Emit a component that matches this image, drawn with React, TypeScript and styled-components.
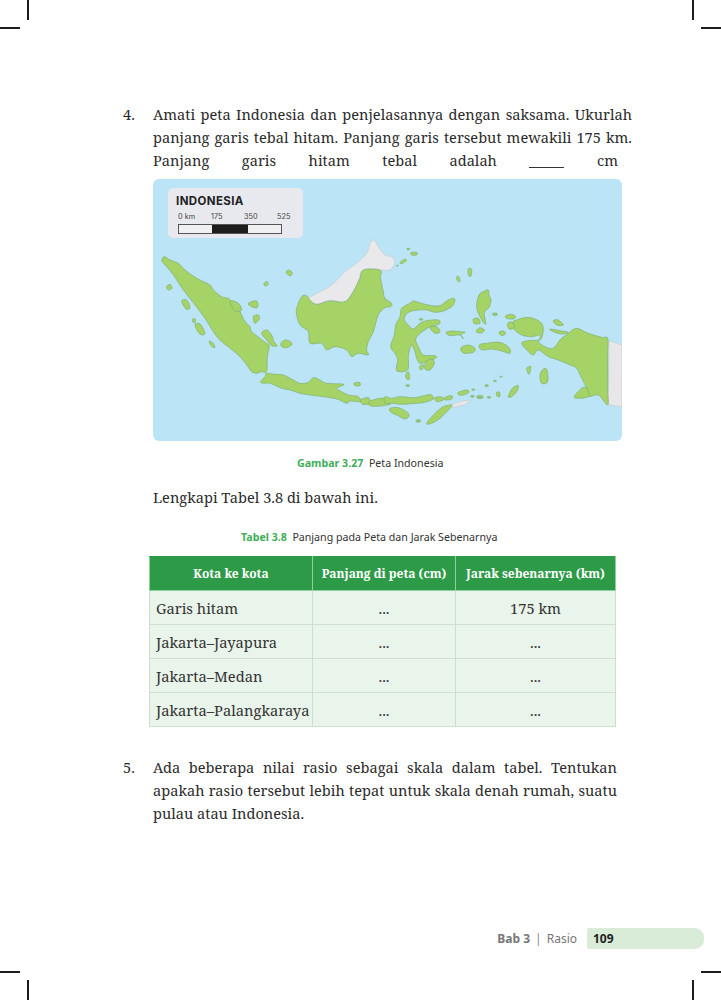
import React from "react";
import styled, { createGlobalStyle } from "styled-components";

const GlobalStyle = createGlobalStyle`
  html, body { margin: 0; padding: 0; background: #fff; }
`;

const SERIF = `"Noto Serif", "DejaVu Serif", serif`;

/* Map shapes, in 3x coordinates of each half of the map */
const WEST_LAND = [
  "37,250 45,245 60,255 85,265 105,285 125,300 150,315 180,330 190,345 215,365 235,370 250,385 265,400 275,420 285,440 300,455 305,470 330,490 350,505 358,515 352,545 350,590 335,590 320,595 305,590 290,570 270,545 240,520 210,495 190,470 165,430 135,390 100,345 70,300 50,275 37,260",
  "332,620 345,605 350,595 375,598 400,600 425,612 450,625 475,622 490,608 510,615 530,625 582,628 560,640 575,650 595,660 625,665 630,680 600,678 590,685 560,672 520,665 480,660 450,655 420,645 395,640 360,625 340,625",
  "440,400 455,365 470,362 480,375 500,388 540,378 585,380 610,350 630,310 640,285 690,285 692,310 700,350 705,370 725,385 722,395 705,398 685,420 670,470 655,500 650,525 655,540 625,535 605,545 590,525 555,515 530,525 515,505 480,505 475,470 450,450 440,420",
  "335,475 350,465 365,480 372,500 382,512 365,512 350,495",
  "393,505 405,495 422,500 425,510 410,518 395,515",
  "408,292 418,285 427,295 420,303",
  "295,385 320,378 322,398 305,395",
  "310,425 325,420 328,432 315,445",
  "240,378 265,385 275,405 255,408",
  "50,335 60,328 66,340 55,345",
  "95,378 110,375 120,398 108,402",
  "135,450 150,447 165,475 150,478",
  "178,498 190,505 195,518 183,512",
  "128,432 136,432 136,442 129,442",
  "342,325 352,320 354,330 344,332",
  "632,675 655,668 660,685 638,688",
  "658,680 690,670 720,672 720,688 680,694 660,692",
  "612,625 628,622 630,632 615,632",
];

const EAST_LAND = [
  "205,370 210,378 200,395 175,408 150,412 125,405 100,405 75,410 62,420 58,435 70,450 85,462 105,445 125,437 160,435 163,447 135,455 115,468 100,480 92,495 100,515 115,540 150,542 152,550 125,560 105,565 95,550 90,530 80,510 75,520 70,545 68,585 35,587 38,555 30,535 17,515 28,480 32,450 45,425 50,400 75,385 85,378 110,385 140,392 165,392 185,378",
  "385,440 395,435 430,427 465,440 475,460 470,490 460,500 480,515 505,520 525,495 550,475 575,460 610,475 650,487 668,490 668,540 668,600 668,650 668,690 640,660 610,665 605,640 590,610 575,580 555,570 520,555 490,545 460,525 445,540 430,530 410,505 430,497 460,495 465,480 440,485 410,480 385,460",
  "568,668 590,640 605,640 610,665",
  "125,745 150,715 175,695 200,690 195,700 165,730 140,745",
  "0,665 20,670 45,665 90,668 125,660 140,660 145,672 120,682 85,686 45,688 25,685 0,685",
  "150,668 170,666 175,675 155,680",
  "178,668 200,662 200,672 182,675",
  "15,700 40,698 65,710 72,722 60,732 35,720 18,712",
  "220,652 245,645 252,652 235,660 222,660",
  "228,518 250,510 270,520 265,532 240,535 230,530",
  "283,510 305,505 345,502 372,518 375,535 350,528 320,522 290,525",
  "183,472 205,468 240,472 228,478 235,492 225,480 195,482",
  "275,465 285,458 298,465 290,474 276,472",
  "342,472 355,468 362,476 350,482",
  "282,360 295,350 310,345 312,360 318,375 312,398 298,412 302,448 285,425 275,395",
  "265,432 280,430 285,445 268,446",
  "362,422 380,418 392,425 385,432 365,430",
  "368,445 382,442 388,458 372,462",
  "505,437 520,435 535,450 515,450",
  "495,462 530,468 550,472 530,477 505,470",
  "465,600 475,582 486,585 488,620 470,625",
  "370,665 382,640 400,632 395,650 380,665",
  "425,580 438,575 432,598",
  "135,458 155,455 165,470 150,475",
  "122,562 140,552 148,565 135,585 120,582",
  "105,572 115,570 112,584 104,582",
  "62,600 70,590 74,612 65,612",
  "250,282 260,282 258,303 250,300",
  "215,305 222,305 225,320 216,316",
  "45,262 60,252 64,258 50,266",
  "78,233 95,232 95,240 80,240",
  "335,652 344,652 344,665 335,662",
];

const TINY_ISLANDS = [
  [70, 222, 5], [68, 632, 6], [100, 738, 8], [265, 644, 5], [305, 632, 6], [330, 618, 5], [348, 605, 4],
  [262, 664, 6], [285, 666, 10], [312, 667, 6], [108, 433, 6], [37, 272, 3], [330, 418, 8],
];

const WEST_GREY = ["475,372 510,350 545,330 585,290 620,265 650,235 660,205 672,195 685,215 705,240 725,245 735,262 720,285 690,285 640,285 620,330 585,380 540,375 500,388"];
const EAST_GREY = [
  "672,497 711,510 711,695 670,690",
  "195,690 230,678 258,675 240,690 200,698",
];

/* closed catmull-rom through the points, so coasts are not straight segments */
const smooth = (points: string) => {
  const pts = points.split(" ").map((p) => p.split(",").map(Number));
  const n = pts.length;
  let d = `M${pts[0][0]},${pts[0][1]}`;
  for (let i = 0; i < n; i++) {
    const [p0, p1, p2, p3] = [pts[(i - 1 + n) % n], pts[i], pts[(i + 1) % n], pts[(i + 2) % n]];
    const c1 = [p1[0] + (p2[0] - p0[0]) / 6, p1[1] + (p2[1] - p0[1]) / 6];
    const c2 = [p2[0] - (p3[0] - p1[0]) / 6, p2[1] - (p3[1] - p1[1]) / 6];
    d += `C${c1[0]},${c1[1]} ${c2[0]},${c2[1]} ${p2[0]},${p2[1]}`;
  }
  return d + "Z";
};

const Page = styled.div`
  position: relative;
  width: 721px;
  height: 1000px;
  overflow: hidden;
  display: flex;
  flex-direction: column;
  padding-top: 103px;
  box-sizing: border-box;
  font-family: ${SERIF};
  color: #2b2b2b;
`;

const Crop = styled.span<{ $x: "left" | "right"; $y: "top" | "bottom"; $dir: "h" | "v" }>`
  position: absolute;
  background: #1c1c1c;
  ${({ $dir, $x }) =>
    $dir === "h"
      ? `width: 20px; height: 2px; ${$x}: 0;`
      : `width: 2px; height: 20px; ${$x}: 27px;`}
  ${({ $dir, $y }) => ($dir === "h" ? `${$y}: 27px;` : `${$y}: 0;`)}
`;

const Item = styled.div`
  display: flex;
  padding-left: 123px;
`;

const Marker = styled.div`
  width: 30px;
  font-size: 14.6px;
  line-height: 23px;
`;

const Body = styled.div<{ $width: number }>`
  width: ${({ $width }) => $width}px;
`;

const Line = styled.div<{ $justify?: boolean; $width?: number }>`
  font-size: 14.6px;
  line-height: 23px;
  white-space: nowrap;
  ${({ $width }) => $width && `width: ${$width}px;`}
  ${({ $justify }) => $justify && "text-align: justify; text-align-last: justify; white-space: normal;"}
`;

const Blank = styled.span`
  display: inline-block;
  width: 35px;
  height: 13px;
  border-bottom: 1px solid #333;
  vertical-align: -2px;
`;

const MapCard = styled.div`
  position: relative;
  width: 469px;
  height: 262px;
  margin-top: 7px;
  background: #bbe5f6;
  border-radius: 6px;
  overflow: hidden;
`;

const MapSvg = styled.svg`
  display: block;
  width: 100%;
  height: 100%;
`;

const Legend = styled.div`
  position: absolute;
  left: 15px;
  top: 9px;
  width: 135px;
  height: 50px;
  padding: 7px 0 0 8px;
  box-sizing: border-box;
  background: #e8e8ef;
  border-radius: 5px;
  font-family: Inter, "Liberation Sans", sans-serif;
  color: #222;
`;

const LegendTitle = styled.div`
  font-size: 11.5px;
  font-weight: 700;
  line-height: 12px;
  letter-spacing: 0.4px;
`;

const ScaleLabels = styled.div`
  display: flex;
  margin-top: 5px;
  font-size: 7.3px;
  line-height: 9px;
  color: #444;
`;

const ScaleLabel = styled.span`
  flex: none;
  width: 33px;
  padding-left: 2px;
  box-sizing: border-box;
`;

const ScaleBar = styled.div`
  display: flex;
  width: 104px;
  height: 10px;
  margin: 3px 0 0 2px;
  box-sizing: border-box;
  border: 1px solid #555;
  background: #f0f0f2;
`;

const ScaleSegment = styled.div<{ $dark?: boolean; $width: number }>`
  width: ${({ $width }) => $width}px;
  background: ${({ $dark }) => ($dark ? "#1d1d1d" : "transparent")};
`;

const Caption = styled.div<{ $left: number; $top: number }>`
  margin: ${({ $top }) => $top}px 0 0 ${({ $left }) => $left}px;
  font-family: "Noto Sans", sans-serif;
  font-size: 10.65px;
  line-height: 14px;
  color: #333;
  white-space: pre;
`;

const CaptionLabel = styled.span`
  color: #3fae5a;
  font-weight: 700;
`;

const Lead = styled.div`
  margin: 16px 0 0 153px;
  font-size: 14.6px;
  line-height: 23px;
`;

const Table = styled.table`
  width: 466px;
  margin: 12px 0 0 149px;
  border-collapse: collapse;
  table-layout: fixed;
`;

const HeadCell = styled.th<{ $width: number }>`
  width: ${({ $width }) => $width}px;
  height: 34px;
  padding: 0;
  box-sizing: border-box;
  background: #2d9a47;
  border: 1px solid #8fd09c;
  border-top-color: #2d9a47;
  color: #fff;
  font-size: 12px;
  font-weight: 700;
  text-align: center;
`;

const Cell = styled.td<{ $first?: boolean }>`
  height: 34px;
  padding: ${({ $first }) => ($first ? "0 0 0 6px" : "0")};
  box-sizing: border-box;
  background: #e9f4ea;
  border: 1px solid #cfdfcd;
  font-size: 14.7px;
  text-align: ${({ $first }) => ($first ? "left" : "center")};
  color: #333;
  white-space: nowrap;
`;

const ClosingItem = styled(Item)`
  margin-top: 29px;
`;

const Footer = styled.div`
  display: flex;
  align-items: center;
  align-self: flex-end;
  margin-top: auto;
  margin-bottom: 51px;
  margin-right: 17px;
  font-family: "Noto Sans", sans-serif;
  font-size: 12px;
  color: #777;
`;

const Chapter = styled.b`
  font-weight: 700;
`;

const Divider = styled.span`
  margin: 0 5px;
  color: #888;
  font-weight: 400;
`;

const PageNumber = styled.div`
  width: 117px;
  height: 21px;
  margin-left: 10px;
  padding-left: 6px;
  box-sizing: border-box;
  background: #d9ecd8;
  border-radius: 2px 9px 9px 2px;
  color: #222;
  font-weight: 700;
  line-height: 22px;
`;

const LAND_STYLE = { fill: "#a6d365", stroke: "#7dae72", strokeWidth: 2 };

const IndonesiaMap = () => (
  <MapSvg viewBox="0 0 469 262">
    <g transform="translate(-3,-4) scale(0.3333)">
      {WEST_GREY.map((points) => (
        <path key={points} d={smooth(points)} fill="#e9e9ec" stroke="#c4ccd2" strokeWidth={2} />
      ))}
      {WEST_LAND.map((points) => (
        <path key={points} d={smooth(points)} {...LAND_STYLE} />
      ))}
    </g>
    <g transform="translate(232,-4) scale(0.3333)">
      {EAST_GREY.map((points) => (
        <polygon key={points} points={points} fill="#e7e7ea" stroke="#c4ccd2" strokeWidth={2} />
      ))}
      {EAST_LAND.map((points) => (
        <path key={points} d={smooth(points)} {...LAND_STYLE} />
      ))}
      {TINY_ISLANDS.map(([x, y, r]) => (
        <ellipse key={`${x}-${y}`} cx={x} cy={y} rx={r} ry={r * 0.55} fill="#8fc274" stroke="#7dae72" />
      ))}
    </g>
  </MapSvg>
);

const ROWS = [
  ["Garis hitam", "...", "175 km"],
  ["Jakarta–Jayapura", "...", "..."],
  ["Jakarta–Medan", "...", "..."],
  ["Jakarta–Palangkaraya", "...", "..."],
];

const CROPS = [
  { x: "left", y: "top" },
  { x: "right", y: "top" },
  { x: "left", y: "bottom" },
  { x: "right", y: "bottom" },
] as const;

export default function App() {
  return (
    <Page>
      <GlobalStyle />
      {CROPS.map(({ x, y }) => (
        <React.Fragment key={x + y}>
          <Crop $x={x} $y={y} $dir="h" />
          <Crop $x={x} $y={y} $dir="v" />
        </React.Fragment>
      ))}

      <Item>
        <Marker>4.</Marker>
        <Body $width={479}>
          <Line $justify>Amati peta Indonesia dan penjelasannya dengan saksama. Ukurlah</Line>
          <Line $justify>panjang garis tebal hitam. Panjang garis tersebut mewakili 175 km.</Line>
          <Line $justify $width={465}>
            Panjang garis hitam tebal adalah <Blank /> cm
          </Line>
          <MapCard>
            <IndonesiaMap />
            <Legend>
              <LegendTitle>INDONESIA</LegendTitle>
              <ScaleLabels>
                <ScaleLabel>0 km</ScaleLabel>
                <ScaleLabel>175</ScaleLabel>
                <ScaleLabel>350</ScaleLabel>
                <ScaleLabel>525</ScaleLabel>
              </ScaleLabels>
              <ScaleBar>
                <ScaleSegment $width={33} />
                <ScaleSegment $width={36} $dark />
              </ScaleBar>
            </Legend>
          </MapCard>
        </Body>
      </Item>

      <Caption $left={297} $top={15}>
        <CaptionLabel>Gambar 3.27</CaptionLabel>{"  "}Peta Indonesia
      </Caption>

      <Lead>Lengkapi Tabel 3.8 di bawah ini.</Lead>

      <Caption $left={241} $top={21}>
        <CaptionLabel>Tabel 3.8</CaptionLabel>{"  "}Panjang pada Peta dan Jarak Sebenarnya
      </Caption>

      <Table>
        <thead>
          <tr>
            <HeadCell $width={163}>Kota ke kota</HeadCell>
            <HeadCell $width={143}>Panjang di peta (cm)</HeadCell>
            <HeadCell $width={160}>Jarak sebenarnya (km)</HeadCell>
          </tr>
        </thead>
        <tbody>
          {ROWS.map(([city, onMap, real]) => (
            <tr key={city}>
              <Cell $first>{city}</Cell>
              <Cell>{onMap}</Cell>
              <Cell>{real}</Cell>
            </tr>
          ))}
        </tbody>
      </Table>

      <ClosingItem>
        <Marker>5.</Marker>
        <Body $width={464}>
          <Line $justify>Ada beberapa nilai rasio sebagai skala dalam tabel. Tentukan</Line>
          <Line $justify>apakah rasio tersebut lebih tepat untuk skala denah rumah, suatu</Line>
          <Line>pulau atau Indonesia.</Line>
        </Body>
      </ClosingItem>

      <Footer>
        <Chapter>Bab 3</Chapter>
        <Divider>|</Divider>
        Rasio
        <PageNumber>109</PageNumber>
      </Footer>
    </Page>
  );
}
